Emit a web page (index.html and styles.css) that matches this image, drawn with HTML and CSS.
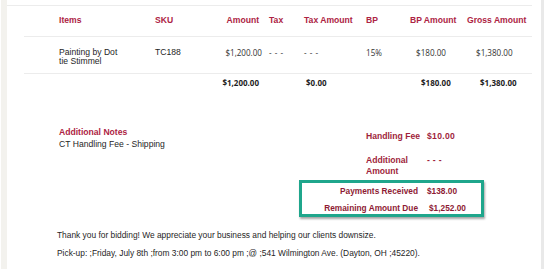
FILE: index.html
```html
<!DOCTYPE html>
<html>
<head>
<meta charset="utf-8">
<link rel="stylesheet" href="styles.css">
</head>
<body>
<div class="page">
  <div class="rail"></div>
  <div class="content">
    <table class="items">
      <colgroup>
        <col class="c-item"><col class="c-sku"><col class="c-amt"><col class="c-tax"><col class="c-taxamt"><col class="c-bp"><col class="c-bpamt"><col class="c-gross">
      </colgroup>
      <thead>
        <tr>
          <th class="first">Items</th>
          <th>SKU</th>
          <th class="r">Amount</th>
          <th>Tax</th>
          <th>Tax Amount</th>
          <th>BP</th>
          <th>BP Amount</th>
          <th>Gross Amount</th>
        </tr>
      </thead>
      <tbody>
        <tr class="row">
          <td class="first txt">Painting by Dot<br>tie Stimmel</td>
          <td class="txt">TC188</td>
          <td class="num r">$1,200.00</td>
          <td class="num dash">- - -</td>
          <td class="num dash">- - -</td>
          <td class="num">15%</td>
          <td class="num bpv">$180.00</td>
          <td class="num grv">$1,380.00</td>
        </tr>
        <tr class="tot">
          <td class="first"></td>
          <td></td>
          <td class="num r">$1,200.00</td>
          <td></td>
          <td class="num t0">$0.00</td>
          <td></td>
          <td class="num bpt">$180.00</td>
          <td class="num grt">$1,380.00</td>
        </tr>
      </tbody>
    </table>

    <div class="below">
      <div class="notes">
        <div class="notes-title">Additional Notes</div>
        <div class="notes-text">CT Handling Fee - Shipping</div>
      </div>
      <div class="summary">
        <div class="srow">
          <div class="slabel">Handling Fee</div>
          <div class="sval">$10.00</div>
        </div>
        <div class="srow">
          <div class="slabel">Additional Amount</div>
          <div class="sval">- - -</div>
        </div>
        <div class="box">
          <div class="brow">
            <div class="blabel">Payments Received</div>
            <div class="bval">$138.00</div>
          </div>
          <div class="brow">
            <div class="blabel">Remaining Amount Due</div>
            <div class="bval bval2">$1,252.00</div>
          </div>
        </div>
      </div>
    </div>

    <p class="msg">Thank you for bidding! We appreciate your business and helping our clients downsize.</p>
    <p class="msg msg2">Pick-up: ;Friday, July 8th ;from 3:00 pm to 6:00 pm ;@ ;541 Wilmington Ave. (Dayton, OH ;45220).</p>
  </div>
  <div class="scroll"></div>
</div>
</body>
</html>
```

FILE: styles.css
```css
html, body {
  margin: 0;
  padding: 0;
  background: #ffffff;
}
body {
  font-family: "Liberation Sans", Arial, sans-serif;
  color: #262626;
  overflow: hidden;
}
.page {
  display: flex;
  height: 269px;
  width: 544px;
}
.rail {
  margin-left: 1px;
  width: 6px;
  background: #f3f2ee;
  flex: none;
}
.content {
  flex: none;
  width: 534px;
  position: relative;
}
.content::before {
  content: "";
  display: block;
  margin-top: 5px;
  width: 525px;
  border-top: 1px solid #ececec;
}
.scroll {
  flex: none;
  margin-left: 0;
  width: 3px;
  background: #e9e9e9;
}
.items {
  margin-left: 17px;
  width: 508px;
  border-collapse: collapse;
  table-layout: fixed;
}
.c-item { width: 126px; }
.c-sku { width: 50px; }
.c-amt { width: 64px; }
.c-tax { width: 35px; }
.c-taxamt { width: 62px; }
.c-bp { width: 44px; }
.c-bpamt { width: 57px; }
.c-gross { width: 70px; }

th {
  font-size: 8.6px;
  font-weight: bold;
  color: #ad2343;
  text-align: left;
  padding: 8px 0 10px 5px;
  line-height: 12px;
  border-bottom: 1px solid #ececec;
  white-space: nowrap;
}
th.first, td.first { padding-left: 35px; }
th.r { text-align: right; padding-right: 5px; }
td {
  padding: 0 0 0 5px;
  vertical-align: top;
  white-space: nowrap;
}
.row td {
  padding-top: 11px;
  padding-bottom: 7px;
  line-height: 9px;
  border-bottom: 1px solid #ececec;
}
.txt {
  font-size: 8.6px;
  color: #262626;
}
.num {
  font-family: "Open Sans", "Liberation Sans", sans-serif;
  font-size: 8.1px;
  color: #333333;
}
td.r { text-align: right; padding-right: 2px; }
.dash { letter-spacing: 0.5px; }
.bpv { padding-left: 11px; }
.grv { padding-left: 14px; }
.tot td {
  padding-top: 4px;
  padding-bottom: 4px;
  line-height: 10px;
  font-weight: bold;
  color: #1e1e1e;
  font-size: 8px;
}
.tot td.r { padding-right: 5px; }
.t0 { padding-left: 7px; }
.bpt { padding-left: 16px; }
.grt { padding-left: 18px; }

.below {
  display: flex;
  margin-top: 34px;
}
.notes {
  padding-left: 52px;
  width: 240px;
  flex: none;
  font-size: 8.6px;
  line-height: 12px;
}
.notes-title {
  color: #ad2343;
  font-weight: bold;
}
.notes-text { color: #262626; }
.summary {
  width: 185px;
  flex: none;
  padding-top: 5px;
}
.srow {
  display: flex;
  padding-left: 67px;
  font-size: 8.6px;
  line-height: 11px;
  margin-bottom: 13px;
}
.srow + .srow { margin-bottom: 3px; }
.slabel {
  width: 55px;
  color: #a01f3c;
  font-weight: bold;
  flex: none;
}
.sval {
  margin-left: 6px;
  color: #a01f3c;
  font-weight: bold;
  letter-spacing: 0.3px;
}
.box {
  border: 3px solid #1fa68c;
  box-shadow: 1px 2px 2px rgba(0,0,0,0.35);
  padding: 3px 0 1px 0;
  display: flex;
  flex-direction: column;
  gap: 7px;
}
.brow {
  display: flex;
  line-height: 10px;
  font-size: 8.3px;
  font-weight: bold;
  color: #8e1b34;
}
.blabel {
  width: 116px;
  text-align: right;
  flex: none;
}
.bval {
  margin-left: 9px;
}
.bval2 { margin-left: 11px; }

.msg {
  margin: 12px 0 0 50px;
  font-size: 8.4px;
  line-height: 12px;
  color: #262626;
}
.msg2 { margin-top: 6px; }
```
